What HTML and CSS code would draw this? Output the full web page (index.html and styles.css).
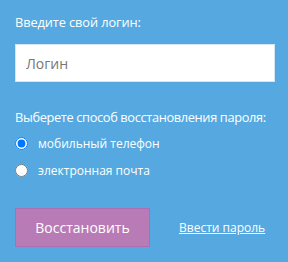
FILE: index.html
```
<!DOCTYPE html>
<html lang="ru">

<head>
  <meta charset="UTF-8" />
  <meta name="viewport" content="width=device-width, initial-scale=1.0" />
  <title>Восстановление пароля</title>
  <link rel="stylesheet" href="styles.css">
</head>

<body>
  <form class="recover">
    <label class="label" for="login">Введите свой логин:</label>
    <input class="field" id="login" type="text" placeholder="Логин" autofocus />

    <div class="label method">Выберете способ восстановления пароля:</div>
    <label class="option">
      <input type="radio" name="way" checked />
      <span>мобильный телефон</span>
    </label>
    <label class="option">
      <input type="radio" name="way" />
      <span>электронная почта</span>
    </label>

    <div class="actions">
      <button type="button" class="btn">Восстановить</button>
      <a href="#" class="link">Ввести пароль</a>
    </div>
  </form>
</body>

</html>
```

FILE: styles.css
```
body {
  margin: 0;
  background: #55a9e0;
  font-family: "Open Sans", sans-serif;
  color: #fff;
}

.recover {
  display: flex;
  flex-direction: column;
  padding: 13px 13px 0 15px;
}

.label {
  font-size: 12.8px;
  line-height: 18px;
  white-space: nowrap;
  letter-spacing: -0.1px;
}

.field {
  box-sizing: border-box;
  margin-top: 13px;
  width: 260px;
  height: 38px;
  border: 1px solid #d2e6f5;
  padding: 0 10px;
  font-family: inherit;
  font-size: 14px;
  color: #333;
  background: #fff;
  outline: none;
  caret-color: #000;
}

.field::placeholder {
  color: #777;
}

.method {
  margin-top: 26px;
  letter-spacing: -0.35px;
}

.option {
  display: flex;
  align-items: center;
  gap: 10px;
  height: 27px;
  font-size: 12px;
}

.method + .option {
  margin-top: 4px;
}

.option input {
  margin: 0;
  width: 13px;
  height: 13px;
}

.actions {
  display: flex;
  align-items: center;
  margin-top: 24px;
}

.btn {
  width: 135px;
  height: 39px;
  background: #b97bb5;
  border: 1px solid #a96fb5;
  color: #fff;
  font-family: inherit;
  font-size: 14px;
  cursor: pointer;
}

.link {
  margin-left: 29px;
  color: #fff;
  font-size: 12px;
}
```
